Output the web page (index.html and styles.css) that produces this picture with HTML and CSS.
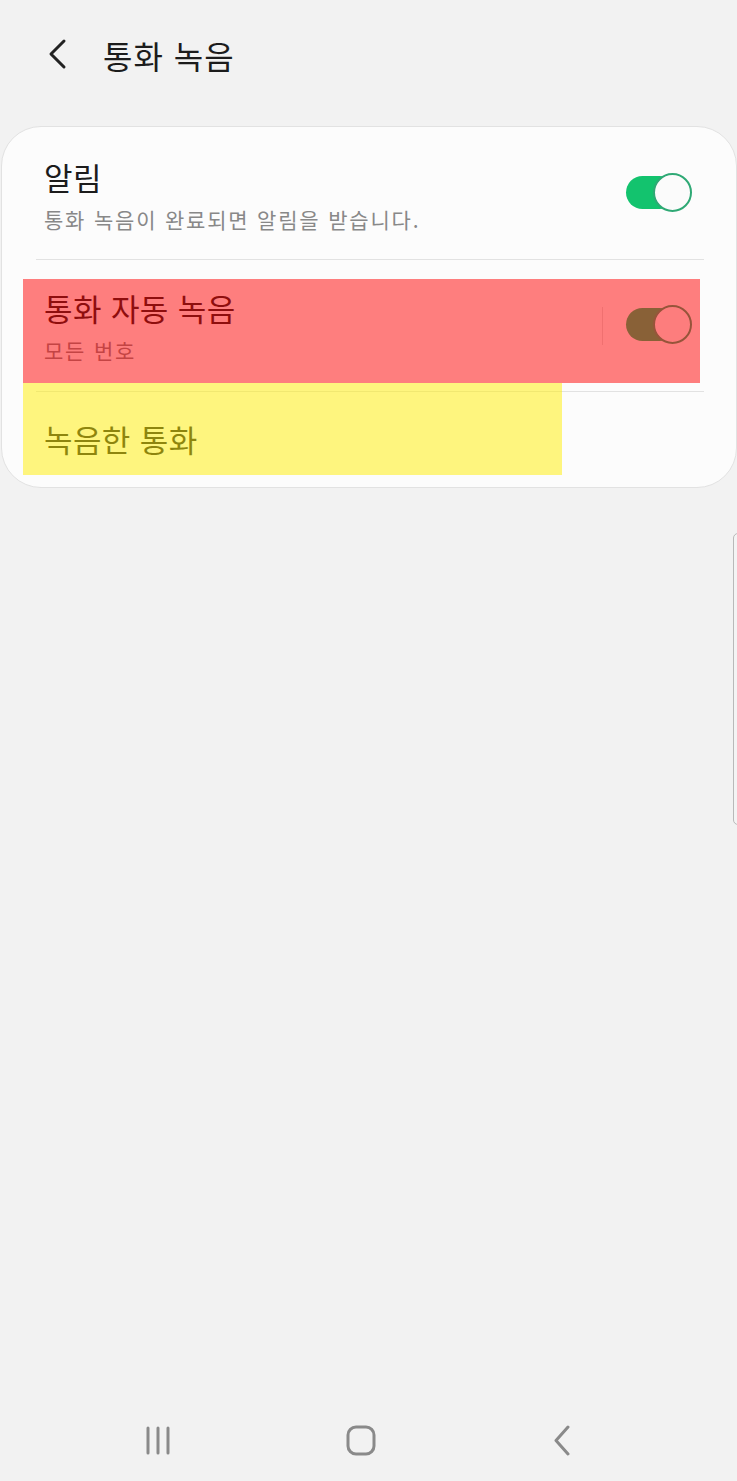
FILE: index.html
```html
<!DOCTYPE html>
<html lang="ko">
<head>
<meta charset="utf-8">
<title>통화 녹음</title>
<link rel="stylesheet" href="styles.css">
</head>
<body>
<div class="screen">
  <header class="appbar">
    <span class="back">
      <svg width="24" height="32" viewBox="0 0 24 32"><polyline points="19,3 6,16 19,29" fill="none" stroke="#222" stroke-width="3" stroke-linecap="round" stroke-linejoin="round"/></svg>
    </span>
    <h1 class="title">통화 녹음</h1>
  </header>

  <section class="card">
    <div class="row row-first">
      <div class="texts">
        <div class="primary">알림</div>
        <div class="secondary">통화 녹음이 완료되면 알림을 받습니다.</div>
      </div>
      <span class="switch on"><span class="thumb"></span></span>
    </div>
    <div class="divider"></div>
    <div class="row row-second">
      <div class="texts">
        <div class="primary">통화 자동 녹음</div>
        <div class="secondary">모든 번호</div>
      </div>
      <span class="vsep"></span>
      <span class="switch on"><span class="thumb"></span></span>
    </div>
    <div class="divider"></div>
    <div class="row row-third">
      <div class="texts">
        <div class="primary">녹음한 통화</div>
      </div>
    </div>
    <div class="hl hl-red"></div>
    <div class="hl hl-yellow"></div>
  </section>

  <div class="spacer"></div>

  <nav class="navbar">
    <span class="nav-item">
      <svg width="30" height="32" viewBox="0 0 30 32"><g stroke="#8a8a8a" stroke-width="3" stroke-linecap="round"><line x1="4" y1="3" x2="4" y2="28"/><line x1="14" y1="3" x2="14" y2="28"/><line x1="24" y1="3" x2="24" y2="28"/></g></svg>
    </span>
    <span class="nav-item">
      <svg width="32" height="32" viewBox="0 0 32 32"><rect x="3" y="2" width="26" height="27" rx="8" fill="none" stroke="#8a8a8a" stroke-width="3"/></svg>
    </span>
    <span class="nav-item">
      <svg width="24" height="32" viewBox="0 0 24 32"><polyline points="17,2 5,15.5 17,29" fill="none" stroke="#8a8a8a" stroke-width="3" stroke-linecap="round" stroke-linejoin="round"/></svg>
    </span>
  </nav>

  <div class="edge-handle"></div>
</div>
</body>
</html>
```

FILE: styles.css
```css
html, body {
  margin: 0;
  padding: 0;
}
body {
  background: #f2f2f2;
  font-family: "Noto Sans CJK KR", "Noto Sans", sans-serif;
  color: #1c1c1c;
}
.screen {
  position: relative;
  width: 737px;
  height: 1481px;
  display: flex;
  flex-direction: column;
  overflow: hidden;
}
.appbar {
  height: 126px;
  display: flex;
  align-items: flex-start;
  box-sizing: border-box;
  padding-top: 38px;
  padding-left: 45px;
}
.back {
  display: flex;
  width: 24px;
  height: 32px;
}
.title {
  margin: 0 0 0 34px;
  font-size: 32px;
  font-weight: 400;
  line-height: 34px;
  letter-spacing: 1px;
  color: #1c1c1c;
}
.card {
  position: relative;
  margin-left: 1px;
  width: 736px;
  box-sizing: border-box;
  background: #fcfcfc;
  border: 1px solid #e2e2e2;
  border-radius: 40px;
  display: flex;
  flex-direction: column;
}
.row {
  display: flex;
  align-items: center;
  padding: 0 44px 0 42px;
  box-sizing: border-box;
}
.row-first {
  height: 132px;
}
.row-second {
  height: 131px;
}
.row-third {
  height: 95px;
}
.texts {
  flex: 1;
  align-self: flex-start;
  display: flex;
  flex-direction: column;
}
.row-first .texts {
  margin-top: 32px;
}
.row-second .texts {
  margin-top: 30px;
}
.row-third .texts {
  margin-top: 29px;
}
.primary {
  font-size: 31px;
  line-height: 36px;
  letter-spacing: 0.4px;
  color: #1c1c1c;
}
.secondary {
  margin-top: 11px;
  font-size: 21px;
  line-height: 26px;
  letter-spacing: 1.8px;
  color: #888888;
}
.divider {
  height: 1px;
  background: #e2e2e2;
  margin: 0 32px 0 34px;
}
.vsep {
  width: 1px;
  height: 38px;
  background: #e0e0e0;
  margin-right: 23px;
}
.switch {
  position: relative;
  width: 66px;
  height: 39px;
  display: inline-block;
  flex: none;
  margin-top: -2px;
}
.switch::before {
  content: "";
  position: absolute;
  left: 0;
  top: 3px;
  width: 50px;
  height: 33px;
  border-radius: 17px;
  background: #13c36e;
}
.switch .thumb {
  position: absolute;
  right: 0;
  top: 0;
  width: 35px;
  height: 35px;
  border-radius: 50%;
  background: #fbfbfb;
  border: 2px solid #2fa975;
}
.hl {
  position: absolute;
  pointer-events: none;
}
.hl-red {
  left: 21px;
  top: 152px;
  width: 677px;
  height: 104px;
  background: rgba(255, 0, 0, 0.5);
}
.hl-yellow {
  left: 21px;
  top: 256px;
  width: 539px;
  height: 92px;
  background: rgba(255, 238, 0, 0.5);
}
.spacer {
  flex: 1;
}
.navbar {
  height: 82px;
  display: grid;
  grid-template-columns: 202px 202px 202px;
  padding-left: 58px;
  align-items: center;
}
.nav-item {
  display: flex;
  justify-content: center;
  align-items: center;
  height: 32px;
  margin-top: 2px;
}
.edge-handle {
  position: absolute;
  left: 733px;
  top: 533px;
  width: 10px;
  height: 292px;
  box-sizing: border-box;
  border: 1px solid #b9b9b9;
  border-radius: 7px;
  background: #f4f4f4;
}
```
